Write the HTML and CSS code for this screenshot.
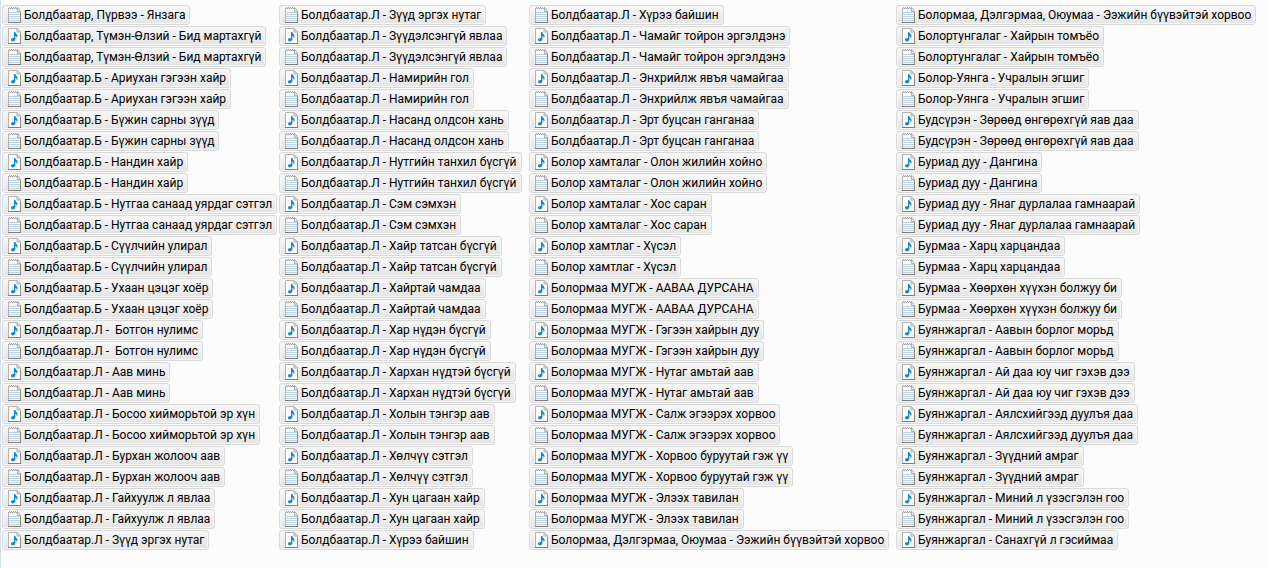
FILE: index.html
```html
<!DOCTYPE html>
<html lang="mn">
<head>
<meta charset="utf-8">
<title>Дуунууд</title>
<link rel="stylesheet" href="styles.css">
</head>
<body>
<svg class="sprite" aria-hidden="true">
  <symbol id="txt" viewBox="0 0 13 16">
    <path d="M0.5 1.500H9.500L12.500 4.500V15.500H0.500Z" fill="#f6f9fb" stroke="#b4b4b4"/>
    <path d="M0 0.500h13v1h-13Z" fill="#f5f5f5"/>
    <path d="M1 0.500h1m1 0h1m1 0h1m1 0h1m1 0h1" stroke="#a6a6a6"/>
    <path d="M0 1.500h1m1 0h1m1 0h1m1 0h1m1 0h1" stroke="#a6a6a6"/>
    <path d="M9.500 0.500V4.500H12.500" fill="#e9e9e9" stroke="#b0b0b0"/>
    <path d="M9.500 0.500L12.500 3.500" stroke="#b0b0b0"/>
    <path d="M1 5.500h11M1 7.500h11M1 9.500h11M1 11.500h11M1 13.500h11" stroke="#bed2e0"/>
    <path d="M12.500 5v10" stroke="#8c8c8c"/>
    <path d="M0 15.500h13" stroke="#7c7c7c"/>
  </symbol>
  <symbol id="song" viewBox="0 0 13 16">
    <path d="M0.500 0.500H9L12.500 4V15.500H0.500Z" fill="#fefefe" stroke="#b4b4b4"/>
    <path d="M9 0.500V4H12.500Z" fill="#e8e8e8" stroke="#b0b0b0"/>
    <path d="M12.500 5v10" stroke="#8c8c8c"/>
    <path d="M0 15.500h13" stroke="#7c7c7c"/>
    <path d="M6 4h1.200c.2 1.600 2.600 2.300 2.400 4.500-.1 1-.6 1.500-1.100 2 .4-1.300 .1-2.200-1.100-2.700V11c0 1.500-1.200 2.400-2.500 2.400S3 12.700 3 11.700s1.100-1.900 3-1.700Z" fill="#1689d6"/>
  </symbol>
</svg>
<main class="files">
<ul class="column">
<li><button class="file"><svg class="icon"><use href="#txt"/></svg>Болдбаатар, Пүрвээ - Янзага</button></li>
<li><button class="file"><svg class="icon"><use href="#song"/></svg>Болдбаатар, Түмэн-Өлзий - Бид мартахгүй</button></li>
<li><button class="file"><svg class="icon"><use href="#txt"/></svg>Болдбаатар, Түмэн-Өлзий - Бид мартахгүй</button></li>
<li><button class="file"><svg class="icon"><use href="#song"/></svg>Болдбаатар.Б - Ариухан гэгээн хайр</button></li>
<li><button class="file"><svg class="icon"><use href="#txt"/></svg>Болдбаатар.Б - Ариухан гэгээн хайр</button></li>
<li><button class="file"><svg class="icon"><use href="#song"/></svg>Болдбаатар.Б - Бүжин сарны зүүд</button></li>
<li><button class="file"><svg class="icon"><use href="#txt"/></svg>Болдбаатар.Б - Бүжин сарны зүүд</button></li>
<li><button class="file"><svg class="icon"><use href="#song"/></svg>Болдбаатар.Б - Нандин хайр</button></li>
<li><button class="file"><svg class="icon"><use href="#txt"/></svg>Болдбаатар.Б - Нандин хайр</button></li>
<li><button class="file"><svg class="icon"><use href="#song"/></svg>Болдбаатар.Б - Нутгаа санаад уярдаг сэтгэл</button></li>
<li><button class="file"><svg class="icon"><use href="#txt"/></svg>Болдбаатар.Б - Нутгаа санаад уярдаг сэтгэл</button></li>
<li><button class="file"><svg class="icon"><use href="#song"/></svg>Болдбаатар.Б - Сүүлчийн улирал</button></li>
<li><button class="file"><svg class="icon"><use href="#txt"/></svg>Болдбаатар.Б - Сүүлчийн улирал</button></li>
<li><button class="file"><svg class="icon"><use href="#song"/></svg>Болдбаатар.Б - Ухаан цэцэг хоёр</button></li>
<li><button class="file"><svg class="icon"><use href="#txt"/></svg>Болдбаатар.Б - Ухаан цэцэг хоёр</button></li>
<li><button class="file"><svg class="icon"><use href="#song"/></svg>Болдбаатар.Л -  Ботгон нулимс</button></li>
<li><button class="file"><svg class="icon"><use href="#txt"/></svg>Болдбаатар.Л -  Ботгон нулимс</button></li>
<li><button class="file"><svg class="icon"><use href="#song"/></svg>Болдбаатар.Л - Аав минь</button></li>
<li><button class="file"><svg class="icon"><use href="#txt"/></svg>Болдбаатар.Л - Аав минь</button></li>
<li><button class="file"><svg class="icon"><use href="#song"/></svg>Болдбаатар.Л - Босоо хийморьтой эр хүн</button></li>
<li><button class="file"><svg class="icon"><use href="#txt"/></svg>Болдбаатар.Л - Босоо хийморьтой эр хүн</button></li>
<li><button class="file"><svg class="icon"><use href="#song"/></svg>Болдбаатар.Л - Бурхан жолооч аав</button></li>
<li><button class="file"><svg class="icon"><use href="#txt"/></svg>Болдбаатар.Л - Бурхан жолооч аав</button></li>
<li><button class="file"><svg class="icon"><use href="#song"/></svg>Болдбаатар.Л - Гайхуулж л явлаа</button></li>
<li><button class="file"><svg class="icon"><use href="#txt"/></svg>Болдбаатар.Л - Гайхуулж л явлаа</button></li>
<li><button class="file"><svg class="icon"><use href="#song"/></svg>Болдбаатар.Л - Зүүд эргэх нутаг</button></li>
</ul>
<ul class="column">
<li><button class="file"><svg class="icon"><use href="#txt"/></svg>Болдбаатар.Л - Зүүд эргэх нутаг</button></li>
<li><button class="file"><svg class="icon"><use href="#song"/></svg>Болдбаатар.Л - Зүүдэлсэнгүй явлаа</button></li>
<li><button class="file"><svg class="icon"><use href="#txt"/></svg>Болдбаатар.Л - Зүүдэлсэнгүй явлаа</button></li>
<li><button class="file"><svg class="icon"><use href="#song"/></svg>Болдбаатар.Л - Намирийн гол</button></li>
<li><button class="file"><svg class="icon"><use href="#txt"/></svg>Болдбаатар.Л - Намирийн гол</button></li>
<li><button class="file"><svg class="icon"><use href="#song"/></svg>Болдбаатар.Л - Насанд олдсон хань</button></li>
<li><button class="file"><svg class="icon"><use href="#txt"/></svg>Болдбаатар.Л - Насанд олдсон хань</button></li>
<li><button class="file"><svg class="icon"><use href="#song"/></svg>Болдбаатар.Л - Нутгийн танхил бүсгүй</button></li>
<li><button class="file"><svg class="icon"><use href="#txt"/></svg>Болдбаатар.Л - Нутгийн танхил бүсгүй</button></li>
<li><button class="file"><svg class="icon"><use href="#song"/></svg>Болдбаатар.Л - Сэм сэмхэн</button></li>
<li><button class="file"><svg class="icon"><use href="#txt"/></svg>Болдбаатар.Л - Сэм сэмхэн</button></li>
<li><button class="file"><svg class="icon"><use href="#song"/></svg>Болдбаатар.Л - Хайр татсан бүсгүй</button></li>
<li><button class="file"><svg class="icon"><use href="#txt"/></svg>Болдбаатар.Л - Хайр татсан бүсгүй</button></li>
<li><button class="file"><svg class="icon"><use href="#song"/></svg>Болдбаатар.Л - Хайртай чамдаа</button></li>
<li><button class="file"><svg class="icon"><use href="#txt"/></svg>Болдбаатар.Л - Хайртай чамдаа</button></li>
<li><button class="file"><svg class="icon"><use href="#song"/></svg>Болдбаатар.Л - Хар нүдэн бүсгүй</button></li>
<li><button class="file"><svg class="icon"><use href="#txt"/></svg>Болдбаатар.Л - Хар нүдэн бүсгүй</button></li>
<li><button class="file"><svg class="icon"><use href="#song"/></svg>Болдбаатар.Л - Хархан нүдтэй бүсгүй</button></li>
<li><button class="file"><svg class="icon"><use href="#txt"/></svg>Болдбаатар.Л - Хархан нүдтэй бүсгүй</button></li>
<li><button class="file"><svg class="icon"><use href="#song"/></svg>Болдбаатар.Л - Холын тэнгэр аав</button></li>
<li><button class="file"><svg class="icon"><use href="#txt"/></svg>Болдбаатар.Л - Холын тэнгэр аав</button></li>
<li><button class="file"><svg class="icon"><use href="#song"/></svg>Болдбаатар.Л - Хөлчүү сэтгэл</button></li>
<li><button class="file"><svg class="icon"><use href="#txt"/></svg>Болдбаатар.Л - Хөлчүү сэтгэл</button></li>
<li><button class="file"><svg class="icon"><use href="#song"/></svg>Болдбаатар.Л - Хун цагаан хайр</button></li>
<li><button class="file"><svg class="icon"><use href="#txt"/></svg>Болдбаатар.Л - Хун цагаан хайр</button></li>
<li><button class="file"><svg class="icon"><use href="#song"/></svg>Болдбаатар.Л - Хүрээ байшин</button></li>
</ul>
<ul class="column">
<li><button class="file"><svg class="icon"><use href="#txt"/></svg>Болдбаатар.Л - Хүрээ байшин</button></li>
<li><button class="file"><svg class="icon"><use href="#song"/></svg>Болдбаатар.Л - Чамайг тойрон эргэлдэнэ</button></li>
<li><button class="file"><svg class="icon"><use href="#txt"/></svg>Болдбаатар.Л - Чамайг тойрон эргэлдэнэ</button></li>
<li><button class="file"><svg class="icon"><use href="#song"/></svg>Болдбаатар.Л - Энхрийлж явъя чамайгаа</button></li>
<li><button class="file"><svg class="icon"><use href="#txt"/></svg>Болдбаатар.Л - Энхрийлж явъя чамайгаа</button></li>
<li><button class="file"><svg class="icon"><use href="#song"/></svg>Болдбаатар.Л - Эрт буцсан ганганаа</button></li>
<li><button class="file"><svg class="icon"><use href="#txt"/></svg>Болдбаатар.Л - Эрт буцсан ганганаа</button></li>
<li><button class="file"><svg class="icon"><use href="#song"/></svg>Болор хамталаг - Олон жилийн хойно</button></li>
<li><button class="file"><svg class="icon"><use href="#txt"/></svg>Болор хамталаг - Олон жилийн хойно</button></li>
<li><button class="file"><svg class="icon"><use href="#song"/></svg>Болор хамталаг - Хос саран</button></li>
<li><button class="file"><svg class="icon"><use href="#txt"/></svg>Болор хамталаг - Хос саран</button></li>
<li><button class="file"><svg class="icon"><use href="#song"/></svg>Болор хамтлаг - Хүсэл</button></li>
<li><button class="file"><svg class="icon"><use href="#txt"/></svg>Болор хамтлаг - Хүсэл</button></li>
<li><button class="file"><svg class="icon"><use href="#song"/></svg>Болормаа МУГЖ - ААВАА ДУРСАНА</button></li>
<li><button class="file"><svg class="icon"><use href="#txt"/></svg>Болормаа МУГЖ - ААВАА ДУРСАНА</button></li>
<li><button class="file"><svg class="icon"><use href="#song"/></svg>Болормаа МУГЖ - Гэгээн хайрын дуу</button></li>
<li><button class="file"><svg class="icon"><use href="#txt"/></svg>Болормаа МУГЖ - Гэгээн хайрын дуу</button></li>
<li><button class="file"><svg class="icon"><use href="#song"/></svg>Болормаа МУГЖ - Нутаг амьтай аав</button></li>
<li><button class="file"><svg class="icon"><use href="#txt"/></svg>Болормаа МУГЖ - Нутаг амьтай аав</button></li>
<li><button class="file"><svg class="icon"><use href="#song"/></svg>Болормаа МУГЖ - Салж эгээрэх хорвоо</button></li>
<li><button class="file"><svg class="icon"><use href="#txt"/></svg>Болормаа МУГЖ - Салж эгээрэх хорвоо</button></li>
<li><button class="file"><svg class="icon"><use href="#song"/></svg>Болормаа МУГЖ - Хорвоо буруутай гэж үү</button></li>
<li><button class="file"><svg class="icon"><use href="#txt"/></svg>Болормаа МУГЖ - Хорвоо буруутай гэж үү</button></li>
<li><button class="file"><svg class="icon"><use href="#song"/></svg>Болормаа МУГЖ - Элээх тавилан</button></li>
<li><button class="file"><svg class="icon"><use href="#txt"/></svg>Болормаа МУГЖ - Элээх тавилан</button></li>
<li><button class="file"><svg class="icon"><use href="#song"/></svg>Болормаа, Дэлгэрмаа, Оюумаа - Ээжийн бүүвэйтэй хорвоо</button></li>
</ul>
<ul class="column">
<li><button class="file"><svg class="icon"><use href="#txt"/></svg>Болормаа, Дэлгэрмаа, Оюумаа - Ээжийн бүүвэйтэй хорвоо</button></li>
<li><button class="file"><svg class="icon"><use href="#song"/></svg>Болортунгалаг - Хайрын томъёо</button></li>
<li><button class="file"><svg class="icon"><use href="#txt"/></svg>Болортунгалаг - Хайрын томъёо</button></li>
<li><button class="file"><svg class="icon"><use href="#song"/></svg>Болор-Уянга - Учралын эгшиг</button></li>
<li><button class="file"><svg class="icon"><use href="#txt"/></svg>Болор-Уянга - Учралын эгшиг</button></li>
<li><button class="file"><svg class="icon"><use href="#song"/></svg>Будсүрэн - Зөрөөд өнгөрөхгүй яав даа</button></li>
<li><button class="file"><svg class="icon"><use href="#txt"/></svg>Будсүрэн - Зөрөөд өнгөрөхгүй яав даа</button></li>
<li><button class="file"><svg class="icon"><use href="#song"/></svg>Буриад дуу - Дангина</button></li>
<li><button class="file"><svg class="icon"><use href="#txt"/></svg>Буриад дуу - Дангина</button></li>
<li><button class="file"><svg class="icon"><use href="#song"/></svg>Буриад дуу - Янаг дурлалаа гамнаарай</button></li>
<li><button class="file"><svg class="icon"><use href="#txt"/></svg>Буриад дуу - Янаг дурлалаа гамнаарай</button></li>
<li><button class="file"><svg class="icon"><use href="#song"/></svg>Бурмаа - Харц харцандаа</button></li>
<li><button class="file"><svg class="icon"><use href="#txt"/></svg>Бурмаа - Харц харцандаа</button></li>
<li><button class="file"><svg class="icon"><use href="#song"/></svg>Бурмаа - Хөөрхөн хүүхэн болжуу би</button></li>
<li><button class="file"><svg class="icon"><use href="#txt"/></svg>Бурмаа - Хөөрхөн хүүхэн болжуу би</button></li>
<li><button class="file"><svg class="icon"><use href="#song"/></svg>Буянжаргал - Аавын борлог морьд</button></li>
<li><button class="file"><svg class="icon"><use href="#txt"/></svg>Буянжаргал - Аавын борлог морьд</button></li>
<li><button class="file"><svg class="icon"><use href="#song"/></svg>Буянжаргал - Ай даа юу чиг гэхэв дээ</button></li>
<li><button class="file"><svg class="icon"><use href="#txt"/></svg>Буянжаргал - Ай даа юу чиг гэхэв дээ</button></li>
<li><button class="file"><svg class="icon"><use href="#song"/></svg>Буянжаргал - Аялсхийгээд дуулъя даа</button></li>
<li><button class="file"><svg class="icon"><use href="#txt"/></svg>Буянжаргал - Аялсхийгээд дуулъя даа</button></li>
<li><button class="file"><svg class="icon"><use href="#song"/></svg>Буянжаргал - Зүүдний амраг</button></li>
<li><button class="file"><svg class="icon"><use href="#txt"/></svg>Буянжаргал - Зүүдний амраг</button></li>
<li><button class="file"><svg class="icon"><use href="#song"/></svg>Буянжаргал - Миний л үзэсгэлэн гоо</button></li>
<li><button class="file"><svg class="icon"><use href="#txt"/></svg>Буянжаргал - Миний л үзэсгэлэн гоо</button></li>
<li><button class="file"><svg class="icon"><use href="#song"/></svg>Буянжаргал - Санахгүй л гэсиймаа</button></li>
</ul>
</main>
</body>
</html>
```
FILE: styles.css
```css
* { box-sizing: border-box; }

body {
  margin: 0;
  min-height: 100vh;
  background: #fcfcfc;
  border-left: 1px solid #d3e2f2;
}

.sprite {
  display: none;
}

.files {
  display: grid;
  grid-template-columns: 277px 250px 367px 1fr;
  padding: 5px 1px;
}

.column {
  display: flex;
  flex-direction: column;
  gap: 1px;
  margin: 0;
  padding: 0;
  list-style: none;
}

.column li {
  display: flex;
}

.file {
  display: flex;
  align-items: center;
  gap: 3px;
  height: 20px;
  padding: 0 4px 0 5px;
  border: 1px solid #d9d9d9;
  border-radius: 3px;
  background: linear-gradient(#f8f8f8, #e4e4e4);
  box-shadow: inset 0 0 0 1px #f6f6f6;
  color: #000;
  font: 12px/16px "Segoe UI", Roboto, "Noto Sans", sans-serif;
  white-space: pre;
}

.icon {
  flex: none;
  width: 13px;
  height: 16px;
}
```
